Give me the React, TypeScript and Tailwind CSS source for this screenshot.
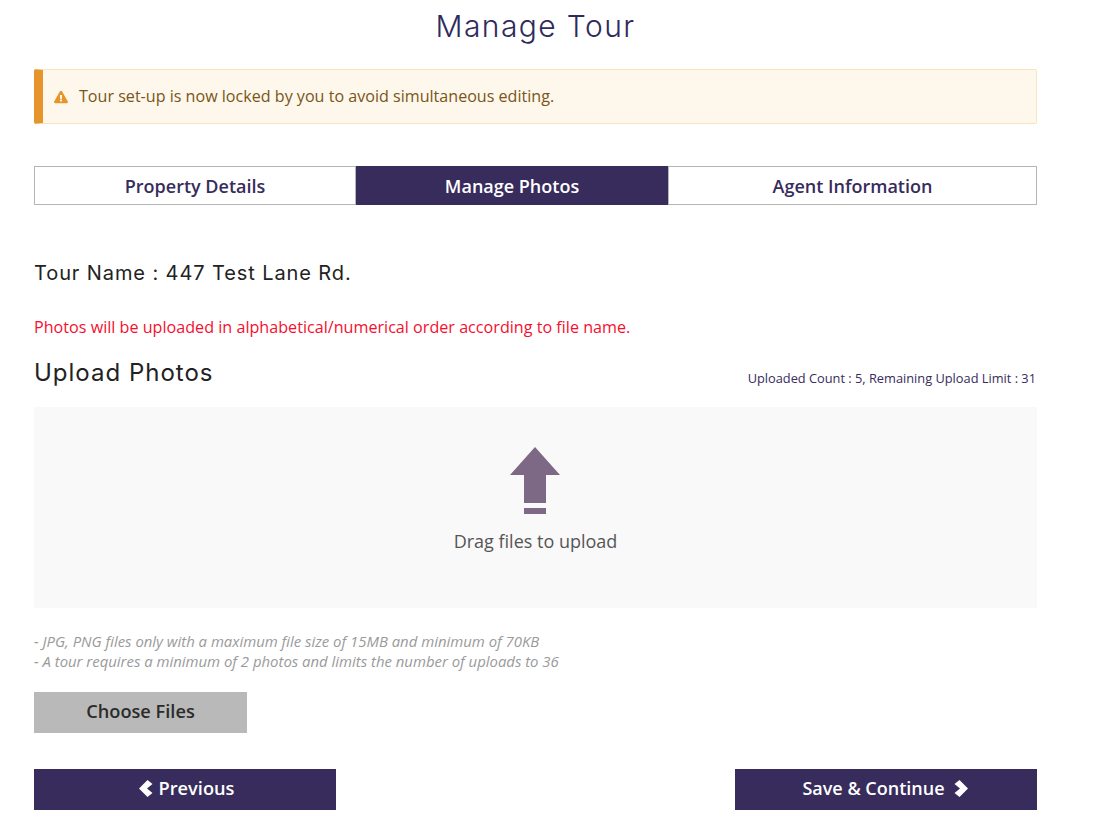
import React from "react";
import { FaExclamationTriangle } from "react-icons/fa";

const tabs = [
  { label: "Property Details", width: "w-[322px]", active: false },
  { label: "Manage Photos", width: "w-[312px]", active: true },
  { label: "Agent Information", width: "flex-1", active: false },
];

const ChevronLeft = () => (
  <svg width="14" height="17" viewBox="0 0 14 17" fill="currentColor">
    <path d="M0 8.5 L8.5 0 L13.5 4 L8 8.5 L13.5 13 L8.5 17 Z" />
  </svg>
);

const ChevronRight = () => (
  <svg width="14" height="17" viewBox="0 0 14 17" fill="currentColor">
    <path d="M14 8.5 L5.5 0 L0.5 4 L6 8.5 L0.5 13 L5.5 17 Z" />
  </svg>
);

const App = () => {
  return (
    <div className="w-[1120px] h-[829px] overflow-hidden bg-white pl-[34px] pr-[83px] font-['Open_Sans',sans-serif]">
      <h1 className="h-[69px] pt-[6px] text-center text-[30px]/[40px] font-light tracking-[1.4px] text-[#2f2a5c] font-['Inter',sans-serif]">
        Manage Tour
      </h1>

      <div className="h-[55px] flex items-center gap-[11px] rounded-[2px] border border-[#fae3bd] border-l-[9px] border-l-[#e5952c] bg-[#fdf7ec] pl-[11px]">
        <FaExclamationTriangle className="text-[#e5952c] w-[14px] h-[14px]" />
        <span className="text-[16.1px] text-[#7a5518]">
          Tour set-up is now locked by you to avoid simultaneous editing.
        </span>
      </div>

      <div className="mt-[42px] h-[39px] flex">
        {tabs.map((tab) => (
          <div
            key={tab.label}
            className={`${tab.width} flex items-center justify-center pt-[1px] text-[18px] font-semibold ${
              tab.active
                ? "bg-[#372c5c] text-white"
                : "bg-white text-[#372c5c] border border-[#b5b5b5]"
            }`}
          >
            {tab.label}
          </div>
        ))}
      </div>

      <p className="mt-[54px] text-[20px]/[28px] tracking-[0.9px] text-[#222] font-['Inter',sans-serif]">
        Tour Name : 447 Test Lane Rd.
      </p>

      <p className="mt-[30px] text-[16.15px]/[20px] text-[#f5102f]">
        Photos will be uploaded in alphabetical/numerical order according to file name.
      </p>

      <div className="mt-[16px] h-[40px] flex items-center justify-between">
        <h2 className="text-[24px]/[32px] tracking-[1px] text-[#222] font-['Inter',sans-serif]">Upload Photos</h2>
        <span className="pt-[12px] pr-[1px] text-[12.8px] text-[#372c5c]">
          Uploaded Count : 5, Remaining Upload Limit : 31
        </span>
      </div>

      <div className="mt-[14px] h-[201px] flex flex-col items-center bg-[#f9f9f9] pt-[40px]">
        <svg width="50" height="67" viewBox="0 0 50 67" className="mr-[2px] text-[#7d6885]">
          <path d="M25 0 L50 28 L36 28 L36 56 L14 56 L14 28 L0 28 Z" fill="currentColor" />
          <rect x="14" y="61" width="22" height="6" fill="currentColor" />
        </svg>
        <span className="mt-[13px] text-[18px]/[28px] text-[#555]">Drag files to upload</span>
      </div>

      <div className="mt-[23px] text-[14.9px]/[20px] italic text-[#9a9a9a]">
        <p>- JPG, PNG files only with a maximum file size of 15MB and minimum of 70KB</p>
        <p>- A tour requires a minimum of 2 photos and limits the number of uploads to 36</p>
      </div>

      <button className="mt-[21px] block w-[213px] h-[41px] pb-[1px] bg-[#b9b9b9] text-[18.2px] font-semibold text-[#2b2b2b]">
        Choose Files
      </button>

      <div className="mt-[36px] flex justify-between">
        <button className="w-[302px] h-[41px] flex items-center justify-center gap-[6px] pl-[3px] pb-[2px] bg-[#372c5c] text-[18.2px] font-semibold text-white">
          <ChevronLeft />
          Previous
        </button>
        <button className="w-[302px] h-[41px] flex items-center justify-center gap-[9px] pr-[2px] pb-[2px] bg-[#372c5c] text-[18px] font-semibold text-white">
          Save &amp; Continue
          <ChevronRight />
        </button>
      </div>
    </div>
  );
};

export default App;
